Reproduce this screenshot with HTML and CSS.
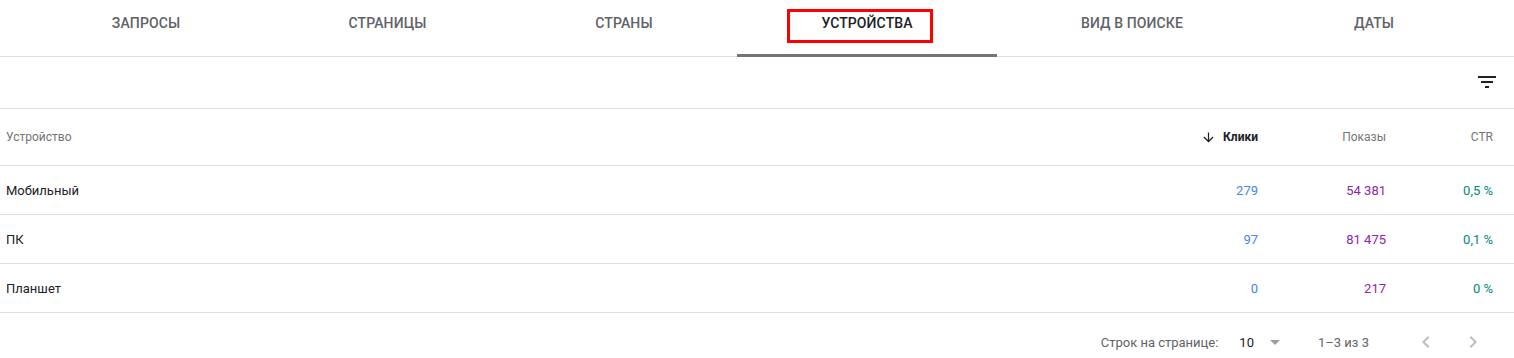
FILE: index.html
```html
<!DOCTYPE html>
<html lang="ru">
<head>
<meta charset="utf-8">
<title>Устройства</title>
<link rel="stylesheet" href="styles.css">
</head>
<body>
<div class="page">
  <nav class="tabs">
    <div class="tab">Запросы</div>
    <div class="tab">Страницы</div>
    <div class="tab">Страны</div>
    <div class="tab active">Устройства<span class="mark"></span></div>
    <div class="tab">Вид в поиске</div>
    <div class="tab">Даты</div>
  </nav>
  <div class="toolbar">
    <svg class="filter" viewBox="0 0 24 24" width="24" height="24"><path d="M10 18h4v-2h-4v2zM3 6v2h18V6H3zm3 7h12v-2H6v2z"/></svg>
  </div>
  <div class="row head">
    <div class="c-name">Устройство</div>
    <div class="c-num sorted"><svg class="arrow" viewBox="0 0 24 24" width="15" height="15"><path d="M20 12l-1.41-1.41L13 16.17V4h-2v12.17l-5.58-5.59L4 12l8 8 8-8z"/></svg>Клики</div>
    <div class="c-num">Показы</div>
    <div class="c-num">CTR</div>
  </div>
  <div class="row">
    <div class="c-name">Мобильный</div>
    <div class="c-num clicks">279</div>
    <div class="c-num shows">54 381</div>
    <div class="c-num ctr">0,5 %</div>
  </div>
  <div class="row">
    <div class="c-name">ПК</div>
    <div class="c-num clicks">97</div>
    <div class="c-num shows">81 475</div>
    <div class="c-num ctr">0,1 %</div>
  </div>
  <div class="row">
    <div class="c-name">Планшет</div>
    <div class="c-num clicks">0</div>
    <div class="c-num shows">217</div>
    <div class="c-num ctr">0 %</div>
  </div>
  <div class="pager">
    <span class="pg-label">Строк на странице:</span>
    <span class="pg-size">10</span>
    <span class="pg-drop"></span>
    <span class="pg-range">1–3 из 3</span>
    <svg class="chev prev" viewBox="0 0 24 24" width="24" height="24"><path d="M15.41 7.41L14 6l-6 6 6 6 1.41-1.41L10.83 12z"/></svg>
    <svg class="chev next" viewBox="0 0 24 24" width="24" height="24"><path d="M10 6L8.59 7.41 13.17 12l-4.58 4.59L10 18l6-6z"/></svg>
  </div>
</div>
</body>
</html>
```
FILE: styles.css
```css
* { box-sizing: border-box; }
html, body { margin: 0; padding: 0; background: #fff; }
body { font-family: Roboto, "Noto Sans", Arial, sans-serif; color: #202124; }
.page { width: 1514px; }

.tabs {
  display: grid;
  grid-template-columns: 236px 247px 226px 260px 270px 214px;
  padding-left: 28px;
  height: 57px;
  border-bottom: 1px solid #e0e0e0;
}
.tab {
  position: relative;
  display: flex;
  align-items: center;
  justify-content: center;
  padding-bottom: 11px;
  text-transform: uppercase;
  font-size: 14px;
  font-weight: 500;
  color: #5f6368;
  letter-spacing: 0.1px;
}
.tab.active {
  color: #202124;
  border-bottom: 3px solid #757575;
  margin-bottom: -1px;
  padding-bottom: 8px;
}
.tab .mark {
  position: absolute;
  left: 50px;
  top: 9px;
  width: 146px;
  height: 34px;
  border: 3px solid #f00;
}

.toolbar {
  height: 52px;
  border-bottom: 1px solid #e0e0e0;
  display: flex;
  align-items: center;
  justify-content: flex-end;
  padding-right: 15px;
}
.filter { fill: #202124; margin-top: -2px; }

.row {
  display: grid;
  grid-template-columns: 1fr 200px 128px 107px;
  align-items: center;
  height: 49px;
  padding: 0 21px 0 6px;
  border-bottom: 1px solid #e0e0e0;
  font-size: 13px;
  color: #202124;
}
.row.head {
  height: 57px;
  font-size: 12px;
  font-weight: 400;
  color: #757575;
}
.c-num { text-align: right; }
.sorted {
  color: #202124;
  font-weight: 700;
  display: flex;
  justify-content: flex-end;
  align-items: center;
  gap: 7px;
}
.arrow { fill: #202124; }
.clicks { color: #4285f4; }
.shows { color: #8e24aa; }
.ctr { color: #00897b; }

.pager {
  height: 46px;
  display: flex;
  align-items: center;
  justify-content: flex-end;
  padding-right: 29px;
  padding-top: 12px;
  font-size: 13px;
  color: #5f6368;
}
.pg-size { margin-left: 21px; color: #202124; font-size: 13px; }
.pg-drop {
  width: 0; height: 0;
  margin-left: 16px;
  border-left: 5px solid transparent;
  border-right: 5px solid transparent;
  border-top: 5px solid #9e9e9e;
}
.pg-range { margin-left: 38px; color: #5f6368; }
.chev { fill: #bdbdbd; }
.chev.prev { margin-left: 45px; }
.chev.next { margin-left: 23px; }
```
